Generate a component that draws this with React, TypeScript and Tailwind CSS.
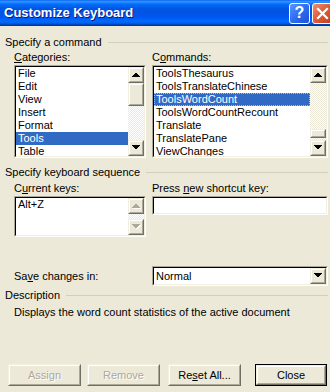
import React from "react";

const Raised = ({ className = "", children }: { className?: string; children?: React.ReactNode }) => (
  <div className={`border border-t-[#F1EFE2] border-l-[#F1EFE2] border-r-[#716F64] border-b-[#716F64] ${className}`}>
    <div className="w-full h-full border border-t-white border-l-white border-r-[#ACA899] border-b-[#ACA899] bg-[#ECE9D8] flex items-center justify-center">
      {children}
    </div>
  </div>
);

const Arrow = ({ dir, disabled = false }: { dir: "up" | "down"; disabled?: boolean }) => {
  const pts = dir === "up" ? "3.5,0 7.5,4 -0.5,4" : "-0.5,0 7.5,0 3.5,4";
  return (
    <svg width="9" height="6" viewBox="0 0 8 5" className="block" shapeRendering="crispEdges">
      {disabled && <polygon points={pts} transform="translate(1,1)" fill="#fff" />}
      <polygon points={pts} fill={disabled ? "#ACA899" : "#000"} />
    </svg>
  );
};

const Sunken = ({ className = "", children }: { className?: string; children?: React.ReactNode }) => (
  <div className={`border border-t-[#ACA899] border-l-[#ACA899] border-r-white border-b-white ${className}`}>
    <div className="w-full h-full border border-t-[#000] border-l-[#000] border-r-[#F1EFE2] border-b-[#F1EFE2] bg-white flex overflow-hidden">
      {children}
    </div>
  </div>
);

const Track = ({ className = "" }: { className?: string }) => (
  <div className={`bg-[image:repeating-conic-gradient(#ECE9D8_0_25%,#ffffff_0_50%)] bg-[length:2px_2px] ${className}`} />
);

const GroupHeader = ({ text, className = "" }: { text: string; className?: string }) => (
  <div className={`flex items-center h-[13px] pl-[5px] pr-[2px] ${className}`}>
    <span className="whitespace-nowrap">{text}</span>
    <div className="flex-1 ml-[6px] border-t border-t-[#D0D0BF]" />
  </div>
);

const Item = ({ text, selected = false, focus = false }: { text: string; selected?: boolean; focus?: boolean }) => (
  <div
    className={`h-[13px] shrink-0 whitespace-nowrap ${
      selected ? "bg-[#316AC5] text-white" : ""
    } ${focus ? "border border-dotted border-[#E8B860] pl-[1px] leading-[11px]" : "pl-[2px]"}`}
  >
    {text}
  </div>
);

const Btn = ({ text, disabled = false, def = false, className = "" }: { text: React.ReactNode; disabled?: boolean; def?: boolean; className?: string }) => {
  const inner = (
    <Raised className="w-full h-full">
      <span className={disabled ? "text-[#ACA899] [text-shadow:1px_1px_0_#fff]" : ""}>{text}</span>
    </Raised>
  );
  return def ? (
    <div className={`border border-black ${className}`}>{inner}</div>
  ) : (
    <div className={className}>{inner}</div>
  );
};

export default function App() {
  return (
    <div className="w-[330px] h-[392px] bg-[#ECE9D8] overflow-hidden flex flex-col text-black font-['Liberation_Sans',Arial,sans-serif] text-[11px] leading-[13px]">
      {/* Title bar */}
      <div className="h-[26px] shrink-0 flex items-center pl-[4px] bg-[linear-gradient(to_bottom,#0058EE_0%,#3592FF_4%,#288EFF_8%,#127DFF_12%,#036FFC_16%,#0262EE_24%,#0057E5_32%,#0054E3_44%,#0055EB_60%,#005BF5_72%,#026AFE_80%,#0062EF_88%,#0052D6_92%,#0040AB_96%,#003092_100%)]">
        <div className="flex-1 text-white font-bold text-[13px] leading-[16px] [text-shadow:1px_1px_0_#0A1883] whitespace-nowrap">
          Customize Keyboard
        </div>
        <div className="w-[21px] h-[21px] shrink-0 rounded-[3px] border border-white bg-[linear-gradient(135deg,#5C94FF_0%,#2E6CF0_50%,#1B52D8_100%)] flex items-center justify-center text-white font-bold text-[16px] leading-none">
          ?
        </div>
        <div className="w-[21px] h-[21px] shrink-0 ml-[2px] mr-[-3px] rounded-[3px] border border-white bg-[linear-gradient(135deg,#EE8F70_0%,#DC5A34_50%,#C2401C_100%)] flex items-center justify-center">
          <svg width="13" height="13" viewBox="0 0 13 13">
            <path d="M2 2 L11 11 M11 2 L2 11" stroke="#fff" strokeWidth="2.2" strokeLinecap="square" />
          </svg>
        </div>
      </div>

      {/* Body */}
      <div className="flex-1 flex flex-col">
        <GroupHeader text="Specify a command" className="mt-[10px]" />

        <div className="flex mt-[2px] h-[13px]">
          <div className="w-[138px] pl-[14px]">
            <u>C</u>ategories:
          </div>
          <div className="pl-[14px]">
            C<u>o</u>mmands:
          </div>
        </div>

        <div className="flex mt-[1px] pl-[14px] gap-[6px]">
          <Sunken className="w-[132px] h-[93px]">
            <div className="flex-1 flex flex-col overflow-hidden">
              <Item text="File" />
              <Item text="Edit" />
              <Item text="View" />
              <Item text="Insert" />
              <Item text="Format" />
              <Item text="Tools" selected />
              <Item text="Table" />
            </div>
            <div className="w-[16px] shrink-0 flex flex-col">
              <Raised className="h-[16px] shrink-0">
                <Arrow dir="up" />
              </Raised>
              <Raised className="h-[23px] shrink-0" />
              <Track className="flex-1" />
              <Raised className="h-[16px] shrink-0">
                <Arrow dir="down" />
              </Raised>
            </div>
          </Sunken>
          <Sunken className="w-[176px] h-[93px]">
            <div className="flex-1 flex flex-col overflow-hidden">
              <Item text="ToolsThesaurus" />
              <Item text="ToolsTranslateChinese" />
              <Item text="ToolsWordCount" selected focus />
              <Item text="ToolsWordCountRecount" />
              <Item text="Translate" />
              <Item text="TranslatePane" />
              <Item text="ViewChanges" />
            </div>
            <div className="w-[16px] shrink-0 flex flex-col">
              <Raised className="h-[16px] shrink-0">
                <Arrow dir="up" />
              </Raised>
              <Track className="flex-1" />
              <Raised className="h-[9px] shrink-0" />
              <Track className="h-[2px] shrink-0" />
              <Raised className="h-[16px] shrink-0">
                <Arrow dir="down" />
              </Raised>
            </div>
          </Sunken>
        </div>

        <GroupHeader text="Specify keyboard sequence" className="mt-[8px]" />

        <div className="flex mt-[3px] h-[13px]">
          <div className="w-[138px] pl-[14px]">
            C<u>u</u>rrent keys:
          </div>
          <div className="pl-[14px]">
            Press <u>n</u>ew shortcut key:
          </div>
        </div>

        <div className="flex items-start mt-[1px] pl-[14px] gap-[6px]">
          <Sunken className="w-[132px] h-[41px]">
            <div className="flex-1 flex flex-col overflow-hidden">
              <Item text="Alt+Z" />
            </div>
            <div className="w-[16px] shrink-0 flex flex-col">
              <Raised className="h-[16px] shrink-0">
                <Arrow dir="up" disabled />
              </Raised>
              <Track className="flex-1" />
              <Raised className="h-[16px] shrink-0">
                <Arrow dir="down" disabled />
              </Raised>
            </div>
          </Sunken>
          <Sunken className="w-[176px] h-[19px]" />
        </div>

        <div className="flex items-center mt-[29px] h-[20px]">
          <div className="w-[152px] pl-[14px]">
            Sa<u>v</u>e changes in:
          </div>
          <Sunken className="w-[176px] h-[20px]">
            <div className="flex-1 pl-[2px] flex items-center">Normal</div>
            <Raised className="w-[16px] h-full shrink-0">
              <Arrow dir="down" />
            </Raised>
          </Sunken>
        </div>

        <GroupHeader text="Description" className="mt-[3px]" />

        <div className="mt-[4px] pl-[14px] whitespace-nowrap">
          Displays the word count statistics of the active document
        </div>

        <div className="mt-auto mb-[6px] flex h-[22px]">
          <Btn text="Assign" disabled className="ml-[8px] w-[73px] h-full" />
          <Btn text="Remove" disabled className="ml-[6px] w-[73px] h-full" />
          <Btn
            text={
              <>
                Re<u>s</u>et All...
              </>
            }
            className="ml-[8px] w-[73px] h-full"
          />
          <Btn text="Close" def className="ml-[14px] w-[72px] h-full" />
        </div>
      </div>
    </div>
  );
}
